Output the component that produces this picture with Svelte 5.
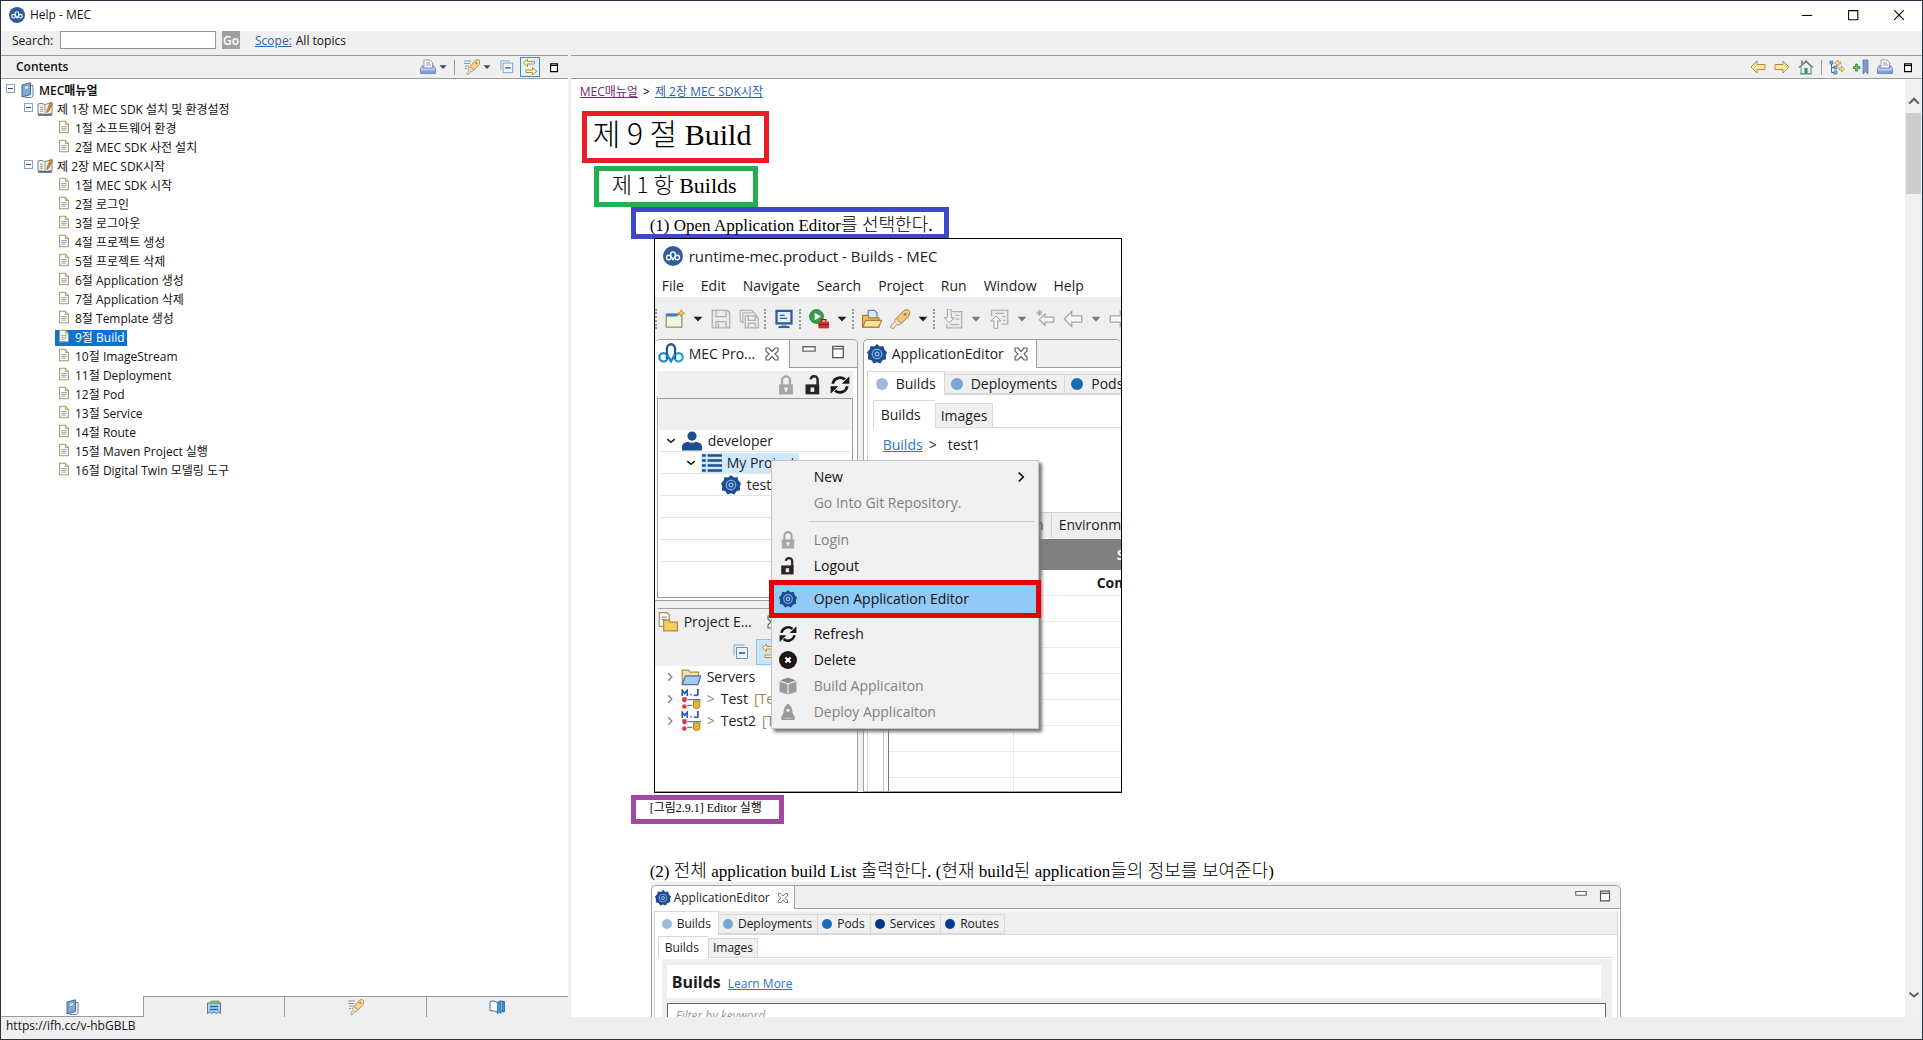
<script>
  const topics = [
    { level: 0, label: 'MEC매뉴얼' },
    { level: 1, label: '제 1장 MEC SDK 설치 및 환경설정' },
    { level: 2, label: '1절 소프트웨어 환경' },
    { level: 2, label: '2절 MEC SDK 사전 설치' },
    { level: 1, label: '제 2장 MEC SDK시작' },
    { level: 2, label: '1절 MEC SDK 시작' },
    { level: 2, label: '2절 로그인' },
    { level: 2, label: '3절 로그아웃' },
    { level: 2, label: '4절 프로젝트 생성' },
    { level: 2, label: '5절 프로젝트 삭제' },
    { level: 2, label: '6절 Application 생성' },
    { level: 2, label: '7절 Application 삭제' },
    { level: 2, label: '8절 Template 생성' },
    { level: 2, label: '9절 Build' },
    { level: 2, label: '10절 ImageStream' },
    { level: 2, label: '11절 Deployment' },
    { level: 2, label: '12절 Pod' },
    { level: 2, label: '13절 Service' },
    { level: 2, label: '14절 Route' },
    { level: 2, label: '15절 Maven Project 실행' },
    { level: 2, label: '16절 Digital Twin 모델링 도구' }
  ];
  let selected = $state(13);
  let view = $state(0);
  const levelIcons = ['book', 'chapter', 'page'];
  const views = [
    { icon: 'book', label: 'Contents' },
    { icon: 'index', label: 'Index' },
    { icon: 'torch', label: 'Search results' },
    { icon: 'bookmarks', label: 'Bookmarks' }
  ];
  const menus = ['File', 'Edit', 'Navigate', 'Search', 'Project', 'Run', 'Window', 'Help'];
  const tools = ['|', 'newwin', 'v', 'save', 'saveall', '|', 'monitor', '|', 'run', 'v', '|', 'open', 'rocket', 'v', '|', 'pull', 'vg', 'push', 'vg', 'lastedit', 'backgray', 'vg', 'fwdgray'];
  const kinds = [
    { label: 'Builds', color: '#9fbbe0' },
    { label: 'Deployments', color: '#7ba3d4' },
    { label: 'Pods', color: '#1b6bb8' },
    { label: 'Services', color: '#05358e' },
    { label: 'Routes', color: '#053a94' }
  ];
</script>

{#snippet icon(name)}
  <svg class="icon" viewBox="0 0 16 16" aria-hidden="true">
    {#if name === 'logo'}
      <circle cx="8" cy="8" r="8" fill="#2f5d9c" />
      <g fill="none" stroke="#fff" stroke-width="1.1">
        <circle cx="4.600" cy="9.200" r="1.800" /><circle cx="11.400" cy="9.200" r="1.800" />
        <path d="M6.200 8V6.500a1.800 1.800 0 0 1 3.600 0V8M6.200 8l1.800 3 1.800-3" />
      </g>
    {:else if name === 'mec'}
      <g fill="none" stroke-width="1.400">
        <circle cx="3.400" cy="10" r="2.600" stroke="#1e88d2" /><circle cx="12.600" cy="10" r="2.600" stroke="#1fa0c8" />
        <path d="M5.500 11V4.500a2.500 2.500 0 0 1 5 0V11" stroke="#27529c" /><path d="M5.500 8L8 12.500 10.500 8" stroke="#1e88d2" />
      </g>
    {:else if name === 'book'}
      <path d="M6 3.500h8V14l-1.500 1.500H6z" fill="#f4f8fc" stroke="#5a87b5" />
      <path d="M3 3L11.500.8v11.700L3 15z" fill="#7ea9cf" stroke="#3f6e9e" /><path d="M6 4.800l3-.8v2.300L6 7z" fill="#dcebf8" />
    {:else if name === 'chapter'}
      <path d="M1 3c3-1 5-.5 7 1 2-1.500 4-2 7-1v10c-3-.5-5 0-7 1-2-1-4-1.500-7-1z" fill="#fbf7e6" stroke="#6d7f95" />
      <path d="M8 4v10M3 6l3 .5M3 8l3 .5M3 10l3 .5" stroke="#8a99ad" fill="none" />
      <path d="M1 14h14" stroke="#44546a" stroke-width="1.500" /><path d="M10 9l3.500-8 2.200 1.200L12 10l-2.200 1.500z" fill="#d98b3a" stroke="#8c5820" stroke-width=".6" />
    {:else if name === 'page'}
      <path d="M3 1.500h6.500L13 5v9.500H3z" fill="#fdfcf4" stroke="#a39b6c" stroke-width="1.200" /><path d="M9.500 1.500V5H13" fill="#e8dba4" stroke="#a39b6c" />
      <path d="M5 7.500h6M5 9.500h6M5 11.500h5" stroke="#8496c4" />
    {:else if name === 'index'}
      <path d="M1.500 4h13v10.500l-2-1.500-2 1.500L8 13l-2.500 1.500-2-1.500-2 1.500z" fill="#a9d0f0" stroke="#3f7db3" /><path d="M4 7.500h8M4 10.500h8" stroke="#2d6ca8" stroke-width="1.300" />
      <path d="M4 4l1-2h8l1 2z" fill="#a3c67a" stroke="#6b9450" stroke-width=".7" />
    {:else if name === 'torch'}
      <path d="M0 2h7M0 4.500h6M1 7h4M1 9.500h2" stroke="#7e94c0" /><path d="M6 7.500L11.500 1l3-.5 1.300 1.500-.6 3.500L10 11z" fill="#f7d588" stroke="#b08338" stroke-width=".8" />
      <path d="M6 7.500l4 3.500-1.800 2-1.200-1-2.500 3.500H3v-2l2-2-1-1.500z" fill="#ece5cc" stroke="#9d8a5c" stroke-width=".7" /><circle cx="12.200" cy="4" r="1.100" fill="#6d86b5" />
    {:else if name === 'rocket'}
      <path d="M5 7.500L11.500 1l3-.5 1.300 1.500-.6 3.500L9 11.500z" fill="#f3c877" stroke="#a9803a" stroke-width=".8" />
      <path d="M5 7.500l4 4L7.200 13 6 12l-3 3.500-2.500-.5L1 12.500 4.500 10 3.500 9z" fill="#ece5cc" stroke="#9d8a5c" stroke-width=".7" /><circle cx="12" cy="4.200" r="1.100" fill="#6d86b5" />
    {:else if name === 'bookmarks'}
      <path d="M1 2.500c3-1 5-.5 7 1 2-1.500 4-2 7-1V12c-3-.5-5 0-7 1-2-1-4-1.500-7-1z" fill="#fdfdf5" stroke="#2b6cb0" /><path d="M8.500 4L12 2.500v12L10.500 13l-2 2z M13 2.500h2.500V13H13z" fill="#3f93e0" stroke="#1d5fa8" stroke-width=".6" />
    {:else if name === 'printer'}
      <path d="M4 8V1h6l2.500 2.500V8" fill="#fff" stroke="#8ba0c4" /><path d="M6 4h4M6 6h5" stroke="#7f97c2" />
      <path d="M3 6L.5 9.500v5h15v-5L13 6v3H3z" fill="#b8cbe9" stroke="#6f8ec2" /><path d="M1 11.500h14V14H1z" fill="#7ea0d8" />
    {:else if name === 'collapse'}
      <path d="M1 11.500V1h10.500" fill="none" stroke="#7aa3c8" /><path d="M3.500 3.500h11v11h-11z" fill="#eef6fc" stroke="#6695bd" /><path d="M6 9h6" stroke="#24528a" stroke-width="1.500" />
    {:else if name === 'sync'}
      <path d="M5.500 0v2.500h7V5h-7v2.500L1.200 3.800z" fill="#fff3c4" stroke="#c08f2c" /><path d="M10.500 8.500V11H4v2.500h6.500V16l4.300-3.700z" fill="#fff3c4" stroke="#c08f2c" />
    {:else if name === 'back' || name === 'backgray'}
      <path d="M7 2v3.500h8v5H7V14L1 8z" fill={name === 'back' ? '#fdeaa8' : '#f7f7f7'} stroke={name === 'back' ? '#b98a35' : '#a5a5a5'} />
    {:else if name === 'fwd' || name === 'fwdgray'}
      <path d="M9 2v3.500H1v5h8V14l6-6z" fill={name === 'fwd' ? '#fdeaa8' : '#f7f7f7'} stroke={name === 'fwd' ? '#b98a35' : '#a5a5a5'} />
    {:else if name === 'lastedit'}
      <path d="M8 4v2.500h7v4H8V13L3.500 8.500z" fill="#f7f7f7" stroke="#a5a5a5" /><path d="M1 3h5M3.500.5v5M1.700 1.200l3.600 3.600M5.300 1.200L1.700 4.800" stroke="#999" stroke-width=".7" />
    {:else if name === 'home'}
      <path d="M3 7.500L8 3l5 4.500v7H3z" fill="#e6f0f4" stroke="#5f8aa0" /><path d="M1 8.500L8 2l7 6.500" fill="none" stroke="#6d8a8e" stroke-width="1.400" />
      <path d="M6.500 9h3v5.500h-3z" fill="#3d8b5c" /><path d="M3 1.500h2V4L3 6z" fill="#b57a52" /><path d="M2 15h12" stroke="#5f9a6a" />
    {:else if name === 'toc'}
      <path d="M1 2h3v3H1zM5 7h3v3H5zM5 12h3v3H5z" fill="#8eb0d8" stroke="#426a9e" stroke-width=".7" /><path d="M2.500 5v8.500H5M2.500 8.500H5" fill="none" stroke="#426a9e" />
      <path d="M6 4l3-3v2h3v2H9v2zM15.500 10l-3 3v-2H10V9h2.500V7z" fill="#fbe29a" stroke="#b98a35" stroke-width=".8" />
    {:else if name === 'addmark'}
      <path d="M2.500 5h2v2.500H7v2H4.500V12h-2V9.500H0v-2h2.500z" fill="#69bd5b" stroke="#2c7a32" stroke-width=".7" /><path d="M10 1h5v14l-2.500-2.500L10 15z" fill="#7b9ccf" stroke="#4a6ea8" stroke-width=".7" />
    {:else if name === 'lock'}
      <path d="M2.500 7.500h11v8h-11z" fill="currentColor" /><path d="M4.800 8V4.200a3.200 3.200 0 0 1 6.400 0V8" fill="none" stroke="currentColor" stroke-width="1.800" /><path d="M7.300 10h1.400v3.500H7.300zM6.500 10h3v1.800h-3z" fill="#eee" />
    {:else if name === 'unlock'}
      <path d="M2 7.500h11v8H2z" fill="#2b2422" /><path d="M11.700 8V4a2.800 2.800 0 0 0-5.600-.5" fill="none" stroke="#2b2422" stroke-width="2" /><path d="M6 10h3v3.500H6z" fill="#eee" />
    {:else if name === 'refresh'}
      <path d="M2.200 7A6 6 0 0 1 12 3.600M13.800 9A6 6 0 0 1 4 12.400" fill="none" stroke="#1d1816" stroke-width="2.200" /><path d="M15.500 1v6H9.500zM.5 15V9h6z" fill="#1d1816" />
    {:else if name === 'delete'}
      <circle cx="8" cy="8" r="8" fill="#1d1816" /><path d="M5.700 5.700l4.600 4.600M10.300 5.700l-4.600 4.600" stroke="#fff" stroke-width="1.800" />
    {:else if name === 'cube'}
      <path d="M8 .5l7 2.500-7 2.500L1 3z" fill="#8b8b8b" /><path d="M.5 4l7 2.500v9l-7-2.500zM15.500 4l-7 2.500v9l7-2.500z" fill="#9b9b9b" />
    {:else if name === 'ship'}
      <path d="M8 .5c3 2 4 5 4 8l2 4v2.500H2v-2.500l2-4c0-3 1-6 4-8z" fill="#9b9b9b" /><circle cx="8" cy="6.500" r="1.500" fill="#eee" /><path d="M5 13.500h6" stroke="#c9c9c9" />
    {:else if name === 'gear'}
      <path d="M8 0l2.200 2 2.900-.5.8 2.900L16 6.500 15 9.200l.3 3-2.900.8-1.700 2.500L8 14.500 5.300 15.500l-1.700-2.500-2.900-.8.3-3L0 6.500l2.100-2.100.8-2.900 2.900.5z" fill="#1c4c92" />
      <circle cx="8" cy="8" r="3.800" fill="none" stroke="#7aa8dc" stroke-width="1.100" /><circle cx="8" cy="8" r="1.500" fill="none" stroke="#9dc4ec" />
    {:else if name === 'user'}
      <circle cx="8" cy="4" r="3.700" fill="#1f4e8f" /><path d="M0 15.500v-3C0 9.500 3 9 5 8.500c2 1.300 4 1.300 6 0 2 .5 5 1 5 4v3z" fill="#1f4e8f" />
    {:else if name === 'list'}
      <path d="M0 2h3M0 6h3M0 10h3M0 14h3M4.500 2H16M4.500 6H16M4.500 10H16M4.500 14H16" stroke="#1f4e8f" stroke-width="2" />
    {:else if name === 'newwin'}
      <path d="M1 4.500h12.500v10H1z" fill="#eef6e4" stroke="#a88a4a" /><path d="M1 3.500h9V6H1z" fill="#3d7cc0" /><path d="M13 .5l.9 2 2 .9-2 .9-.9 2-.9-2-2-.9 2-.9z" fill="#f8cf4e" stroke="#c38b20" stroke-width=".7" />
    {:else if name === 'save'}
      <path d="M1 1h12l2 2v12H1z" fill="#ececec" stroke="#adadad" /><path d="M4 1v5h8V1M4 15v-5h8v5M6 11.500v3.500" fill="none" stroke="#adadad" />
    {:else if name === 'saveall'}
      <path d="M1 1h9l2 2M1 1v9h3M3 3h9l2 2v2M3 3v9" fill="none" stroke="#b5b5b5" /><path d="M5 5.500h8.500l2 2V15H5z" fill="#ececec" stroke="#adadad" /><path d="M7.500 5.500V9H13V5.500M7.500 15v-3.500H13V15" fill="none" stroke="#adadad" />
    {:else if name === 'monitor'}
      <path d="M2 1.500h12v10H2z" fill="#e3efff" stroke="#2c5c9e" stroke-width="1.800" /><path d="M4.500 5h4M4.500 7.500h6" stroke="#2c5c9e" /><path d="M6 12h4v2H6z" fill="#7d9cc4" /><path d="M3.500 14.500h9" stroke="#2c5c9e" stroke-width="1.500" />
    {:else if name === 'run'}
      <circle cx="6" cy="6" r="5.500" fill="#33a148" stroke="#1d7a33" stroke-width=".8" /><path d="M4.500 3l5 3-5 3z" fill="#fff" /><path d="M7.500 10h8.500v5.500H7.500z" fill="#d42f2f" /><path d="M10 10V8.500h3.500V10M7.500 12.500H16" stroke="#8e1a1a" fill="none" />
    {:else if name === 'open'}
      <path d="M5 7V1h5l2 2v4" fill="#dbe7f8" stroke="#6a86b4" /><path d="M.5 14.500V5h4l1 2h8v7.500z" fill="#f0c15c" stroke="#b07f23" /><path d="M3 9h13l-3 5.500H.5z" fill="#fbe1a0" stroke="#b07f23" />
    {:else if name === 'pull'}
      <path d="M7 2h8v13H3v-3" fill="#ebebeb" stroke="#b0b0b0" /><path d="M10 5h3M10 8h3M6 12.500h7" stroke="#b0b0b0" /><path d="M3.500 0v7H1l4 4 4-4H6.500V0z" fill="#f5f5f5" stroke="#9c9c9c" stroke-width=".8" />
    {:else if name === 'push'}
      <path d="M2 6V1h13v11h-5" fill="#ebebeb" stroke="#b0b0b0" /><path d="M5 3.500h7M11 6h2M11 9h2" stroke="#b0b0b0" /><path d="M4 15.500v-6H1.500l4-4 4 4H7v6z" fill="#f5f5f5" stroke="#9c9c9c" stroke-width=".8" />
    {:else if name === 'explorer'}
      <path d="M1 .5h6l2 2v9H1z" fill="#fdfbe9" stroke="#9c9564" /><path d="M3 4h4M3 6h4" stroke="#8496c4" /><path d="M4.500 15V6.500h4l1 1.500h6v7z" fill="#f5cd62" stroke="#b58d2d" />
    {:else if name === 'folder'}
      <path d="M1 13V2.500h5l1 1.500h7v3" fill="#f7e2a4" stroke="#a98d47" /><path d="M3.500 7H16l-2.500 7H1z" fill="#a9c9f0" stroke="#4873ae" />
    {:else if name === 'module'}
      <path d="M1 5.500V1l2 2.500L5 1v4.500" fill="none" stroke="#2a5ca8" stroke-width="1.300" /><path d="M13.500 0v4.500a2 2 0 0 1-3 0" fill="none" stroke="#2a5ca8" stroke-width="1.400" />
      <path d="M7 4l2 1M5 8.500h11M5 13h4" stroke="#5580b8" /><path d="M1 6.500h3.500v3L2.700 11 1 9.500z" fill="#d3364a" /><circle cx="2.700" cy="14" r="1.800" fill="#e0364a" /><path d="M10 9.500h5v5l-2.500 1.500L10 14.500z" fill="#e8b53a" stroke="#a3721c" stroke-width=".7" />
    {:else if name === 'closetab'}
      <path d="M2 2h3l3 3.500L11 2h3v3l-3 3 3 3v3h-3l-3-3.500L5 14H2v-3l3-3-3-3z" fill="#fff" stroke="#666" stroke-width="1.200" />
    {:else if name === 'min'}
      <path d="M1 2h14v5H1z" fill="#fff" stroke="#666" stroke-width="1.500" />
    {:else if name === 'max'}
      <path d="M2 1.500h12v13H2zM2 4.500h12" fill="#fff" stroke="#555" stroke-width="1.500" />
    {:else if name === 'maxbold'}
      <path d="M2.500 2h11v12.500h-11zM2.500 4.500h11" fill="#fff" stroke="#000" stroke-width="1.800" />
    {:else if name === 'down'}
      <path d="M1 4.500h14L8 12z" fill="currentColor" />
    {:else if name === 'chevdown'}
      <path d="M2 5l6 5 6-5" fill="none" stroke="currentColor" stroke-width="2.600" />
    {:else if name === 'chevup'}
      <path d="M1.500 11.500L8 5l6.500 6.500" fill="none" stroke="currentColor" stroke-width="2.800" />
    {:else if name === 'chevright'}
      <path d="M5 2l6 6-6 6" fill="none" stroke="currentColor" stroke-width="2.200" />
    {:else if name === 'wmin'}
      <path d="M2 8.500h12" stroke="#000" stroke-width="1.200" />
    {:else if name === 'wmax'}
      <path d="M3 3h10.500v10.500H3z" fill="none" stroke="#000" stroke-width="1.200" />
    {:else if name === 'wclose'}
      <path d="M2.500 2.500l11 11M13.500 2.500l-11 11" stroke="#000" stroke-width="1.200" />
    {/if}
  </svg>
{/snippet}

{#snippet kindTabs(list)}
  <div class="kinds">
    {#each list as kind, i}
      <button class="kind" class:active={i === 0}>
        <svg class="dot" viewBox="0 0 12 12" aria-hidden="true"><circle cx="6" cy="6" r="6" fill={kind.color} /></svg>
        {kind.label}
      </button>
    {/each}
  </div>
{/snippet}

<div class="window">
  <header class="titlebar">
    <span class="i16">{@render icon('logo')}</span>
    <h1>Help - MEC</h1>
    <button class="wbtn" aria-label="Minimize">{@render icon('wmin')}</button>
    <button class="wbtn" aria-label="Maximize">{@render icon('wmax')}</button>
    <button class="wbtn" aria-label="Close">{@render icon('wclose')}</button>
  </header>

  <form class="search" onsubmit={(e) => e.preventDefault()}>
    <label for="query">Search:</label>
    <input id="query" type="text" />
    <button class="go">Go</button>
    <a class="scope" href="#scope">Scope:</a>
    <span>All topics</span>
  </form>

  <div class="panes">
    <nav class="contents">
      <div class="bar">
        <h2>Contents</h2>
        <button class="tool" aria-label="Print topics">{@render icon('printer')}</button>
        <button class="drop" aria-label="Print menu">{@render icon('down')}</button>
        <i class="sep"></i>
        <button class="tool" aria-label="Search topics">{@render icon('torch')}</button>
        <button class="drop" aria-label="Search menu">{@render icon('down')}</button>
        <button class="tool gap" aria-label="Collapse all">{@render icon('collapse')}</button>
        <button class="tool on" aria-label="Link with contents">{@render icon('sync')}</button>
        <button class="mini" aria-label="Maximize contents">{@render icon('maxbold')}</button>
      </div>
      <ul class="tree">
        {#each topics as topic, i}
          <li class="level{topic.level}">
            {#if topic.level < 2}<button class="twist" aria-label="Collapse"></button>{/if}
            <a href="#topic{i}" class:selected={selected === i} onclick={() => (selected = i)}>
              <span class="ticon">{@render icon(levelIcons[topic.level])}</span>{topic.label}
            </a>
          </li>
        {/each}
      </ul>
      <div class="views">
        {#each views as v, i}
          <button class:active={view === i} aria-label={v.label} onclick={() => (view = i)}>{@render icon(v.icon)}</button>
        {/each}
      </div>
    </nav>

    <main class="topic">
      <div class="bar right">
        <button class="tool" aria-label="Back">{@render icon('back')}</button>
        <button class="tool" aria-label="Forward">{@render icon('fwd')}</button>
        <button class="tool" aria-label="Home">{@render icon('home')}</button>
        <i class="sep"></i>
        <button class="tool" aria-label="Show in contents">{@render icon('toc')}</button>
        <button class="tool" aria-label="Bookmark">{@render icon('addmark')}</button>
        <button class="tool" aria-label="Print">{@render icon('printer')}</button>
        <button class="mini" aria-label="Maximize topic">{@render icon('maxbold')}</button>
      </div>
      <div class="scroller">
        <article>
          <p class="crumbs"><a class="visited" href="#manual">MEC매뉴얼</a> <span>&gt;</span> <a href="#chapter2">제 2장 MEC SDK시작</a></p>
          <h3 class="mark red"><span class="gothic">제 9 절</span> Build</h3>
          <h4 class="mark green"><span class="gothic">제 1 항</span> Builds</h4>
          <p class="mark blue">(1) Open Application Editor<span class="ko">를 선택한다.</span></p>

          <div class="shot">
            <div class="shot-title"><span class="i20">{@render icon('logo')}</span>runtime-mec.product - Builds - MEC</div>
            <div class="shot-menu">{#each menus as m}<span>{m}</span>{/each}</div>
            <div class="shot-tools">
              {#each tools as t}
                {#if t === '|'}<i class="grip"></i>
                {:else if t === 'v'}<span class="i10">{@render icon('down')}</span>
                {:else if t === 'vg'}<span class="i10 dim">{@render icon('down')}</span>
                {:else}<span class="i20">{@render icon(t)}</span>{/if}
              {/each}
            </div>
            <div class="shot-body">
              <div class="shot-left">
                <section class="part projects">
                  <div class="part-tabs">
                    <div class="part-tab"><span class="i26">{@render icon('mec')}</span>MEC Pro...<span class="i16">{@render icon('closetab')}</span></div>
                    <span class="i14">{@render icon('min')}</span>
                    <span class="i14">{@render icon('max')}</span>
                  </div>
                  <div class="locks">
                    <span class="i20 faint">{@render icon('lock')}</span>
                    <span class="i20">{@render icon('unlock')}</span>
                    <span class="i20">{@render icon('refresh')}</span>
                  </div>
                  <div class="grid-tree">
                    <div class="grid-head"></div>
                    <div class="grow d0"><span class="i10">{@render icon('chevdown')}</span><span class="i20">{@render icon('user')}</span>developer</div>
                    <div class="grow d1"><span class="i10">{@render icon('chevdown')}</span><span class="picked"><span class="i20">{@render icon('list')}</span>My Project</span></div>
                    <div class="grow d2"><span class="i20">{@render icon('gear')}</span>test</div>
                    <div class="grow"></div>
                    <div class="grow"></div>
                    <div class="grow"></div>
                    <div class="grow"></div>
                  </div>
                </section>
                <section class="part explorer">
                  <div class="explorer-tab"><span class="i20">{@render icon('explorer')}</span>Project E...<span class="i16">{@render icon('closetab')}</span></div>
                  <div class="explorer-tools"><span class="i16">{@render icon('collapse')}</span><span class="lit">{@render icon('sync')}</span></div>
                  <div class="erow"><span class="i10">{@render icon('chevright')}</span><span class="i20">{@render icon('folder')}</span>Servers</div>
                  <div class="erow"><span class="i10">{@render icon('chevright')}</span><span class="i20">{@render icon('module')}</span><em>&gt;</em>Test <em>[Test]</em></div>
                  <div class="erow"><span class="i10">{@render icon('chevright')}</span><span class="i20">{@render icon('module')}</span><em>&gt;</em>Test2 <em>[Test]</em></div>
                </section>
              </div>
              <section class="part editor">
                <div class="part-tabs">
                  <div class="part-tab"><span class="i20">{@render icon('gear')}</span>ApplicationEditor<span class="i16">{@render icon('closetab')}</span></div>
                </div>
                <div class="editor-in">
                  {@render kindTabs(kinds.slice(0, 3))}
                  <div class="sub">
                    <div class="subtabs"><button class="active">Builds</button><button>Images</button></div>
                    <p class="path"><a href="#builds">Builds</a><span>&gt;</span>test1</p>
                    <div class="details">
                      <div class="detail-tabs"><span>Configuration</span><span>Environment</span></div>
                      <div class="table">
                        <div class="thead">Status</div>
                        <div class="trow"><b>Complete</b></div>
                        {#each Array(8) as _}<div class="trow"></div>{/each}
                      </div>
                    </div>
                  </div>
                </div>
              </section>
            </div>
            <div class="popup">
              <div class="item">New<span class="i12 end">{@render icon('chevright')}</span></div>
              <div class="item off">Go Into Git Repository.</div>
              <hr />
              <div class="item off"><span class="i18 faint">{@render icon('lock')}</span>Login</div>
              <div class="item"><span class="i18">{@render icon('unlock')}</span>Logout</div>
              <div class="item hot"><span class="i18">{@render icon('gear')}</span>Open Application Editor</div>
              <div class="item"><span class="i18">{@render icon('refresh')}</span>Refresh</div>
              <div class="item"><span class="i18">{@render icon('delete')}</span>Delete</div>
              <div class="item off"><span class="i18">{@render icon('cube')}</span>Build Applicaiton</div>
              <div class="item off"><span class="i18">{@render icon('ship')}</span>Deploy Applicaiton</div>
            </div>
          </div>

          <p class="mark purple">[그림2.9.1] Editor 실행</p>
          <p class="step">(2) <span class="ko">전체</span> application build List <span class="ko">출력한다.</span> (<span class="ko">현재</span> build<span class="ko">된</span> application<span class="ko">들의 정보를 보여준다</span>)</p>

          <div class="shot2">
            <section class="part editor small">
              <div class="part-tabs">
                <div class="part-tab"><span class="i16">{@render icon('gear')}</span>ApplicationEditor<span class="i12">{@render icon('closetab')}</span></div>
                <span class="i12">{@render icon('min')}</span>
                <span class="i12">{@render icon('max')}</span>
              </div>
              <div class="editor-in">
                {@render kindTabs(kinds)}
                <div class="sub">
                  <div class="subtabs"><button class="active">Builds</button><button>Images</button></div>
                  <div class="list">
                    <div class="list-head"><b>Builds</b><a href="#learn">Learn More</a></div>
                    <input type="text" aria-label="Filter" placeholder="Filter by keyword" />
                  </div>
                </div>
              </div>
            </section>
          </div>
        </article>
        <div class="scrollbar">
          <button aria-label="Scroll up">{@render icon('chevup')}</button>
          <div class="track"><div class="thumb"></div></div>
          <button aria-label="Scroll down">{@render icon('chevdown')}</button>
        </div>
      </div>
    </main>
  </div>
  <footer>https://ifh.cc/v-hbGBLB</footer>
</div>

<style>
  :global(body) { margin: 0; }
  * { box-sizing: border-box; }
  .window {
    height: 100vh; display: flex; flex-direction: column; overflow: hidden;
    border: 1px solid #2b3146; background: #efefef; color: #111;
    font: 12px/18px "Open Sans", "Noto Sans CJK KR", sans-serif;
  }
  h1, h2, h3, h4, p, ul { margin: 0; padding: 0; font-weight: 400; }
  button { font: inherit; color: inherit; border: 0; padding: 0; margin: 0; background: none; display: flex; align-items: center; justify-content: center; }
  a { color: #2a63b8; }
  .icon { display: block; width: 100%; height: 100%; }
  .i10 { flex: none; width: 10px; height: 10px; }
  .i12 { flex: none; width: 12px; height: 12px; }
  .i14 { flex: none; width: 14px; height: 14px; }
  .i16 { flex: none; width: 16px; height: 16px; }
  .i18 { flex: none; width: 18px; height: 18px; }
  .i20 { flex: none; width: 20px; height: 20px; }
  .i26 { flex: none; width: 26px; height: 26px; }
  .faint { color: #a5a5a5; }
  .dim { color: #777; }

  .titlebar { flex: none; height: 30px; display: flex; align-items: center; gap: 5px; padding: 0 3px 2px 8px; background: #fff; }
  h1 { flex: 1; font-size: 12px; }
  .wbtn { width: 41px; height: 28px; }
  .wbtn .icon { width: 14px; height: 14px; }
  .search { flex: none; height: 24px; display: flex; align-items: flex-start; padding-left: 11px; line-height: 19px; }
  .search input { width: 156px; height: 18px; margin: 0 6px 0 8px; border: 1px solid #949494; background: #fff; font: inherit; }
  .search label { width: 40px; }
  .go { width: 18px; height: 18px; background: #a0a0a0; color: #fff; font-weight: 600; }
  .scope { margin: 0 4px 0 15px; }

  .panes { flex: 1; min-height: 0; display: grid; grid-template-columns: 29.5% 1fr; column-gap: 3px; }
  .contents, .topic { display: flex; flex-direction: column; min-width: 0; min-height: 0; background: #fff; }
  .bar { flex: none; height: 24px; display: flex; align-items: center; background: #efefef; border-top: 1px solid #9a9a9a; border-bottom: 1px solid #9a9a9a; padding: 0 9px 0 15px; }
  h2 { flex: 1; font-size: 12px; font-weight: 600; }
  .tool { width: 16px; height: 16px; }
  .drop { width: 8px; height: 8px; margin-left: 3px; color: #3a4a78; }
  .sep { width: 1px; height: 15px; margin: 0 9px 0 7px; background: #9a9a9a; }
  .gap { width: 14px; height: 14px; margin: 0 6px 0 9px; }
  .on { width: 20px; height: 20px; padding: 1px; border: 1px solid #3a8ac4; background: #e3f1fb; }
  .mini { width: 10px; height: 11px; margin-left: 9px; }
  .right { justify-content: flex-end; gap: 8px; }
  .right .sep { margin: 0 -1px; }
  .right .mini { margin-left: 2px; }

  .tree { flex: 1; list-style: none; padding-top: 2px; overflow: hidden; }
  .tree li { height: 19px; display: flex; align-items: center; }
  .level0 { padding-left: 5px; font-weight: 600; }
  .level1 { padding-left: 23px; }
  .level2 { padding-left: 54px; }
  .twist { width: 9px; height: 9px; margin: 0 1px 4px 0; border: 1px solid #8aa4bb; background: #fff; }
  .twist::before { content: ""; width: 5px; height: 1px; background: #2c4f78; }
  .tree a { display: flex; align-items: center; height: 16px; padding: 0 2px; color: #111; text-decoration: none; white-space: pre; }
  .ticon { width: 16px; height: 16px; margin: 0 4px 2px 1px; }
  .level2 .ticon { width: 14px; height: 14px; margin: 0 4px 3px 0; }
  .tree .selected { background: #0a74d0; color: #fff; }
  .views { flex: none; height: 21px; display: grid; grid-template-columns: repeat(4, 1fr); background: #efefef; }
  .views button { border-top: 1px solid #9a9a9a; border-left: 1px solid #9a9a9a; }
  .views .active { background: #fff; border-color: #fff; border-bottom: 1px solid #9a9a9a; }
  .views .icon { width: 16px; height: 16px; }
  footer { flex: none; height: 22px; padding-left: 5px; line-height: 18px; }

  .scroller { flex: 1; min-height: 0; display: flex; }
  article { flex: 1; min-width: 0; overflow: hidden; padding-left: 9px; font-family: "Liberation Serif", "Noto Sans CJK KR", serif; color: #000; }
  .scrollbar { flex: none; width: 17px; display: flex; flex-direction: column; background: #f0f0f0; color: #606060; }
  .scrollbar button { height: 34px; }
  .scrollbar button:first-child { padding-top: 10px; }
  .scrollbar button:last-child { height: 44px; }
  .scrollbar .icon { width: 12px; height: 12px; }
  .track { flex: 1; }
  .thumb { height: 81px; margin: 0 1px; background: #cdcdcd; }

  .crumbs { padding-top: 4px; font: 12px/18px "Open Sans", "Noto Sans CJK KR", sans-serif; }
  .crumbs .visited { color: #75287e; }
  .crumbs span { margin: 0 2px; }
  .mark { width: max-content; border: 5px solid; white-space: nowrap; }
  .red { margin: 10px 0 0 2px; width: 187px; height: 52px; padding-left: 6px; border-color: #ea1d24; font-size: 30px; line-height: 38px; }
  .green { margin: 3px 0 0 14px; width: 164px; height: 41px; padding-left: 13px; border-color: #22b14c; font-size: 22px; line-height: 30px; }
  .blue { margin: 0 0 0 51px; width: 318px; height: 32px; padding-left: 14px; border-color: #3f48cc; font-size: 17px; line-height: 26px; }
  .ko { font-size: 18px; font-weight: 300; }
  .gothic { font-family: "Noto Sans CJK KR", sans-serif; font-weight: 300; line-height: 1; }
  .purple { margin: 2px 0 0 51px; width: 153px; height: 29px; padding-left: 14px; border-color: #a349a4; font-size: 12px; line-height: 17px; }
  .step { margin: 35px 0 0 70px; font-size: 17px; line-height: 24px; white-space: nowrap; }

  /* First illustration: workbench with an open context menu */
  .shot {
    position: relative; width: 468px; height: 555px; margin: -1px 0 0 74px; overflow: hidden; display: flex; flex-direction: column;
    border: 1px solid #000; background: #fff; color: #1c1c1c; font: 14px/20px "Open Sans", sans-serif; white-space: nowrap;
  }
  .shot-title { height: 33px; display: flex; align-items: center; gap: 6px; padding-left: 8px; font-size: 15px; }
  .shot-menu { height: 25px; display: flex; align-items: center; gap: 17px; padding: 2px 0 0 7px; }
  .shot-tools { height: 42px; display: flex; align-items: center; gap: 8px; padding-top: 2px; background: #efefef; overflow: hidden; }
  .grip { flex: none; width: 5px; height: 20px; margin: 0 -3px; border-left: 2px dotted #999; }
  .grip:first-child { margin-left: 0; }
  .shot-body { flex: 1; min-height: 0; display: flex; gap: 5px; background: #efefef; }
  .shot-left { flex: none; width: 203px; display: flex; flex-direction: column; gap: 7px; }
  .part { background: #fff; border: 1px solid #a0a0a0; border-radius: 5px 5px 0 0; }
  .part-tabs { flex: none; height: 28px; display: flex; gap: 15px; background: linear-gradient(#a0a0a0, #a0a0a0) bottom / 100% 1px no-repeat #efefef; border-radius: 5px 5px 0 0; }
  .part-tab { display: flex; align-items: center; gap: 5px; padding: 0 7px 0 3px; background: #fff; border-right: 1px solid #a0a0a0; border-radius: 5px 0 0 0; }
  .part-tab .i16 { margin-left: 4px; }
  .part-tabs > .i14 { margin-top: 5px; }
  .projects .part-tab { padding-right: 9px; margin-right: -3px; }
  .projects { height: 262px; border-left: 0; border-bottom: 1px solid #a0a0a0; flex: none; }
  .locks { height: 27px; margin: 3px 4px 0 2px; padding-right: 3px; display: flex; align-items: center; justify-content: flex-end; gap: 7px; background: #efefef; }
  .grid-tree { height: 200px; margin: 0 4px 0 2px; border: 1px solid #999; }
  .grid-head { height: 31px; margin: 0 1px; background: #efefef; }
  .grow { height: 22px; display: flex; align-items: center; gap: 6px; margin: 0 2px; border-bottom: 1px solid #e4e4e4; }
  .grow:last-child { border: 0; height: 14px; }
  .d0 { padding-left: 6px; }
  .d1 { padding-left: 26px; gap: 5px; }
  .d2 { padding-left: 61px; }
  .picked { display: flex; gap: 5px; padding: 0 3px 0 1px; background: #cde8ff; }
  .explorer { flex: 1; border-left: 0; }
  .explorer-tab { height: 29px; display: flex; align-items: center; gap: 6px; padding: 0 0 4px 3px; background: #efefef; }
  .explorer-tab .i16 { margin-left: 8px; }
  .explorer-tools { height: 28px; display: flex; align-items: center; gap: 7px; padding-left: 78px; background: #efefef; }
  .lit { width: 26px; height: 26px; padding: 4px; border: 1px solid #8fc3ee; background: #c9e4fb; }
  .erow { height: 22px; display: flex; align-items: center; gap: 6px; padding-left: 10px; color: #222; }
  .erow .i10 { color: #888; }
  em { font-style: normal; color: #98895a; }
  .editor { flex: 1; min-width: 0; border-right-width: 0; display: flex; flex-direction: column; overflow: hidden; }
  .editor-in { flex: 1; min-height: 0; margin: 3px 0 0 3px; display: flex; flex-direction: column; background: #efefef; border-left: 1px solid #d2d2d2; }
  .kinds { flex: none; display: flex; align-items: flex-end; height: 23px; position: relative; }
  .kind { flex: none; gap: 8px; height: 20px; padding: 0 7px 0 6px; border: 1px solid #d8d8d8; border-left: 0; }
  .kind.active { height: 24px; margin-bottom: -1px; padding: 0 8px; background: #fff; border-bottom: 0; }
  .dot { width: 12px; height: 12px; }
  .sub { flex: 1; min-height: 0; display: flex; flex-direction: column; padding: 5px 0 0 5px; background: #fff; border-top: 1px solid #d8d8d8; }
  .subtabs { flex: none; display: flex; align-items: flex-end; height: 28px; border-bottom: 1px solid #d8d8d8; }
  .subtabs button { height: 24px; padding: 0 5px; border: 1px solid #d8d8d8; border-bottom: 0; background: #efefef; }
  .subtabs .active { height: 28px; margin-bottom: -1px; padding: 0 14px 0 7px; border-right: 0; background: #fff; }
  .path { flex: none; padding: 7px 0 0 10px; }
  .path span { margin: 0 11px 0 6px; }
  .path a { color: #2a74d0; }
  .details { flex: none; margin: 57px 0 0 10px; border-left: 1px solid #c8c8c8; }
  .detail-tabs { height: 26px; display: flex; justify-content: flex-end; margin-right: -30px; background: #efefef; border-top: 1px solid #d0d0d0; }
  .detail-tabs span { padding: 2px 7px 0; border-right: 1px solid #d0d0d0; }
  .table { margin: 1px 0 0 4px; border-left: 1px solid #777; border-top: 1px solid #777; background: linear-gradient(#e6e6ea, #e6e6ea) 124px 0 / 1px 100% no-repeat #fff; }
  .thead { height: 30px; padding: 5px 0 0 228px; background: #808080; color: #fff; font-weight: 700; }
  .trow { height: 26px; padding: 3px 0 0 208px; border-bottom: 1px solid #e9e9ed; }

  .popup {
    position: absolute; left: 116px; top: 221px; width: 268px; height: 269px; padding: 3px 0; background: #f0f0f0;
    border: 1px solid #c4c4c4; box-shadow: 3px 3px 3px #777; color: #111;
  }
  .item { height: 26px; display: flex; align-items: center; gap: 17px; padding-left: 42px; }
  .item:has(.i18) { padding-left: 7px; }
  .off { color: #808080; }
  .end { margin: 0 11px 0 auto; }
  hr { height: 1px; margin: 5px 3px 5px 37px; border: 0; background: #ccc; }
  .item.hot { height: 38px; margin: 1px -3px 3px; padding-left: 5px; border: 5px solid #e60006; background: #91c9f7; }

  /* Second illustration: the builds list */
  .shot2 { width: 970px; margin: -2px 0 0 71px; padding-top: 3px; background: #efefef; color: #1c1c1c; font: 12px/18px "Open Sans", sans-serif; white-space: nowrap; }
  .small { height: 200px; border-right-width: 1px; }
  .small .part-tabs { height: 23px; gap: 12px; padding-right: 9px; }
  .small .part-tab { padding: 0 5px 0 3px; gap: 3px; margin-right: auto; }
  .small .part-tab .i16 { margin-left: 0; }
  .small .part-tab .i12 { margin-left: 4px; }
  .small .part-tabs > .i12 { margin-top: 4px; }
  .small .editor-in { margin: 2px 2px 0; border-right: 1px solid #d2d2d2; }
  .small .kind { gap: 5px; padding: 0 5px 0 4px; }
  .small .kind.active { padding: 0 7px; }
  .small .dot { width: 10px; height: 10px; }
  .small .sub { padding: 1px 4px 0 3px; }
  .small .subtabs { height: 22px; }
  .small .subtabs button { height: 19px; padding: 0 4px; }
  .small .subtabs .active { height: 22px; padding: 0 9px 0 6px; }
  .list { flex: 1; margin: 1px 1px 0 4px; padding: 6px 6px 0 5px; background: #efefef; }
  .list-head { height: 33px; margin-right: 5px; display: flex; align-items: baseline; gap: 7px; padding: 8px 0 0 5px; background: #fff; }
  .list-head b { font-size: 16px; }
  .list-head a { color: #2a74d0; }
  .list input { display: block; width: 100%; height: 24px; margin-top: 5px; padding: 0 8px; border: 1px solid #666; font: italic 12px/18px "Open Sans", sans-serif; }
  .list input::placeholder { color: #999; }
</style>
